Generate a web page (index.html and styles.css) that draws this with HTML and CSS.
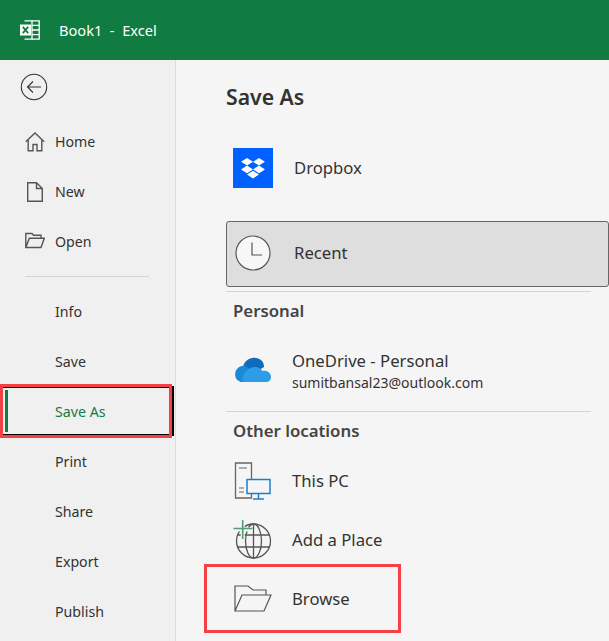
FILE: index.html
```html
<!DOCTYPE html>
<html lang="en">
<head>
<meta charset="utf-8">
<title>Save As</title>
<link rel="stylesheet" href="styles.css">
</head>
<body>
<header class="topbar">
  <svg class="xl-logo" width="20" height="20" viewBox="0 0 20 20" fill="none">
    <path d="M4.500 0.800H19.200V19.200H4.500" stroke="#fff" stroke-width="1.300"/>
    <path d="M12 0.800V19.200M12 5.400H19.200M12 10H19.200M12 14.600H19.200" stroke="#fff" stroke-width="1.300"/>
    <rect x="0" y="4.500" width="11" height="11" fill="#fff"/>
    <path d="M2.800 6.800L8.200 13.200M8.200 6.800L2.800 13.200" stroke="#107c41" stroke-width="1.800"/>
  </svg>
  <span class="doc-title">Book1&nbsp; - &nbsp;Excel</span>
</header>
<div class="body">
  <nav class="side">
    <div class="back">
      <svg width="28" height="28" viewBox="0 0 28 28" fill="none" stroke="#333">
        <circle cx="14" cy="14" r="12.700" stroke-width="1.100"/>
        <path d="M21 14H7.500M13 8.500L7.500 14L13 19.500" stroke-width="1.100"/>
      </svg>
    </div>
    <a class="item"><span class="ico">
      <svg width="20" height="20" viewBox="0 0 20 20" fill="none" stroke="#555" stroke-width="1.400"><path d="M0.800 9.700L10 1L19.200 9.700M3.200 7.800V18.800H8V12.500H12V18.800H16.800V7.800"/></svg>
    </span>Home</a>
    <a class="item"><span class="ico">
      <svg width="20" height="20" viewBox="0 0 20 20" fill="none" stroke="#555" stroke-width="1.400"><path d="M2.700 0.700H11.500L17.300 6.500V19.300H2.700ZM11.500 0.700V6.500H17.300"/></svg>
    </span>New</a>
    <a class="item"><span class="ico">
      <svg width="20" height="20" viewBox="0 0 20 20" fill="none" stroke="#555" stroke-width="1.400"><path d="M0.800 15.500V1.500H7L8.500 3.200H16V6.300M0.800 15.500H16L19.300 6.300H4.300L0.800 15.500Z"/></svg>
    </span>Open</a>
    <div class="side-rule"></div>
    <a class="item">Info</a>
    <a class="item">Save</a>
    <a class="item item-active">Save As<span class="mark"></span></a>
    <a class="item">Print</a>
    <a class="item">Share</a>
    <a class="item">Export</a>
    <a class="item">Publish</a>
  </nav>
  <main class="main">
    <h1 class="title">Save As</h1>
    <div class="row row-dropbox">
      <span class="tile">
        <svg width="26" height="22" viewBox="0 0 26 22" fill="#fff"><path d="M7 1L13 4.800L7 8.600L1 4.800ZM19 1L25 4.800L19 8.600L13 4.800ZM1 12.400L7 8.600L13 12.400L7 16.200ZM19 8.600L25 12.400L19 16.200L13 12.400ZM7 17.600L13 13.800L19 17.600L13 21.400Z"/></svg>
      </span>
      <span class="label">Dropbox</span>
    </div>
    <div class="recent">
      <svg class="clock" width="36" height="36" viewBox="0 0 36 36" fill="#f7f7f7" stroke="#555" stroke-width="1.200"><circle cx="18" cy="18" r="17"/><path d="M17 7.500V20H27" fill="none"/></svg>
      <span class="label">Recent</span>
    </div>
    <div class="rule"></div>
    <h2 class="group">Personal</h2>
    <div class="row row-cloud">
      <span class="ico-box">
        <svg class="cloud" width="36" height="25" viewBox="0 0 36 25">
          <path d="M8 10C9 2 20 -3 27 4C28 5 29 7 29 10L18 17Z" fill="#0f6cbd"/>
          <path d="M4 24C-1 22 -1 14 3 11C5 9 8 8.500 11 9.500L24 19L18 25H8C6 25 5 25 4 24Z" fill="#1b8ad6"/>
          <path d="M12 25C9 25 7 24 7 22C9 15 14 10 20 10C24 10 26 12 27.500 14C32 13 36 16 36 20C36 23 34 25 31 25Z" fill="#2f9ce8"/>
        </svg>
      </span>
      <span class="two-line">
        <span class="label">OneDrive - Personal</span>
        <span class="sub">sumitbansal23@outlook.com</span>
      </span>
    </div>
    <div class="rule rule-low"></div>
    <h2 class="group">Other locations</h2>
    <div class="row row-pc">
      <span class="ico-box">
        <svg width="40" height="38" viewBox="0 0 40 38" fill="none">
          <path d="M2.500 1H18.500V36H2.500Z" stroke="#666" stroke-width="1.300"/>
          <path d="M6 6H14M6 26H11M6 30H11" stroke="#666" stroke-width="1.200"/>
          <rect x="14" y="17.500" width="23" height="14" fill="#f5f5f5" stroke="#1a7fd0" stroke-width="1.500"/>
          <path d="M25.500 31.500V36.500M20 37H31" stroke="#1a7fd0" stroke-width="1.500"/>
        </svg>
      </span>
      <span class="label">This PC</span>
    </div>
    <div class="row row-place">
      <span class="ico-box">
        <svg width="40" height="40" viewBox="0 0 40 40" fill="none">
          <circle cx="20.500" cy="21" r="17" stroke="#555" stroke-width="1.300"/>
          <ellipse cx="20.500" cy="21" rx="8" ry="17" stroke="#555" stroke-width="1.300"/>
          <path d="M4.500 15H36.500M4.500 27H36.500M20.500 4V38" stroke="#555" stroke-width="1.300"/>
          <path d="M9.700 1V20M0.500 9.500H19.500" stroke="#f5f5f5" stroke-width="4"/>
          <path d="M9.700 0V19M0.500 8.500H19.500" stroke="#4fa070" stroke-width="1.600"/>
        </svg>
      </span>
      <span class="label">Add a Place</span>
    </div>
    <div class="row row-browse">
      <span class="ico-box">
        <svg width="38" height="27" viewBox="0 0 38 27" fill="none" stroke="#555" stroke-width="1.200"><path d="M1 26V1H14L19 5H32V10M1 26H30L37 10H8L1 26Z"/></svg>
      </span>
      <span class="label">Browse</span>
      <span class="callout"></span>
    </div>
  </main>
</div>
</body>
</html>
```
FILE: styles.css
```css
* { box-sizing: border-box; }
html, body { margin: 0; height: 100%; overflow: hidden; }
body {
  font-family: "Noto Sans", "Open Sans", sans-serif;
  color: #333;
  background: #f5f5f5;
}
.topbar {
  height: 60px;
  background: #107c41;
  color: #fff;
  display: flex;
  align-items: center;
  padding-left: 20px;
}
.doc-title { margin-left: 19px; font-size: 14.600px; }
.xl-logo { display: block; }
.body { display: flex; height: 581px; }
.side {
  width: 176px;
  flex: none;
  background: #f0f0f0;
  border-right: 1px solid #dcdcdc;
}
.back { height: 57px; padding: 13px 0 0 20px; }
.back svg { display: block; }
.item {
  position: relative;
  display: flex;
  align-items: center;
  height: 50px;
  padding: 0 0 2px 55px;
  font-size: 14.200px;
  color: #333;
}
.ico {
  position: absolute;
  left: 25px;
  top: 15px;
  width: 20px;
  height: 20px;
}
.ico svg { display: block; }
.side-rule {
  height: 1px;
  background: #d4d4d4;
  margin: 9px 26px 10px 25px;
}
.item-active { color: #107c41; }
.mark {
  position: absolute;
  left: 5px;
  top: 3px;
  width: 3px;
  height: 42px;
  background: #107c41;
}
.item-active::after {
  content: "";
  box-sizing: border-box;
  position: absolute;
  left: 0;
  top: -3px;
  width: 172px;
  height: 54px;
  border: 3px solid #f44146;
  box-shadow: inset 0 1px 0 #000, inset 0 -1px 0 #000;
}
.item-active::before {
  content: "";
  position: absolute;
  left: 172px;
  top: -1px;
  width: 2px;
  height: 50px;
  background: #000;
}
.main { flex: 1; min-width: 0; padding-left: 50px; }
.title {
  margin: 0;
  height: 70px;
  padding-top: 22px;
  font-size: 21.200px;
  line-height: 30px;
  font-weight: 600;
  color: #333;
}
.row { position: relative; display: flex; align-items: center; }
.label { font-size: 16.700px; color: #333; line-height: 22px; }
.row-dropbox { height: 40px; margin: 18px 0 33px; padding-left: 7px; }
.tile {
  width: 40px;
  height: 40px;
  margin-right: 21px;
  background: #0061fe;
  display: flex;
  align-items: center;
  justify-content: center;
}
.recent {
  display: flex;
  align-items: center;
  width: 383px;
  height: 66px;
  padding: 0 0 2px 8px;
  background: #dedede;
  border: 1px solid #666;
  border-radius: 3px;
}
.clock { margin-right: 23px; display: block; }
.rule { height: 1px; margin: 4px 18px 0 0; background: #d4d4d4; }
.rule-low { margin-top: 0; }
.group {
  margin: 0;
  height: 38px;
  padding: 9px 0 0 7px;
  font-size: 16.800px;
  line-height: 20px;
  font-weight: 600;
  color: #444;
}
.ico-box {
  width: 66px;
  flex: none;
  padding-right: 12px;
  display: flex;
  align-items: center;
  justify-content: center;
}
.cloud { margin-bottom: 3px; }
.row-cloud { height: 80px; margin-top: 1px; }
.two-line { display: flex; flex-direction: column; }
.sub { font-size: 14px; line-height: 20px; margin-top: 1px; color: #333; }
.row-pc { height: 59px; margin-top: 1px; }
.row-place { height: 59px; }
.row-browse { height: 59px; }
.callout {
  position: absolute;
  left: -22px;
  top: -5px;
  width: 197px;
  height: 69px;
  border: 3px solid #f44146;
}
```
